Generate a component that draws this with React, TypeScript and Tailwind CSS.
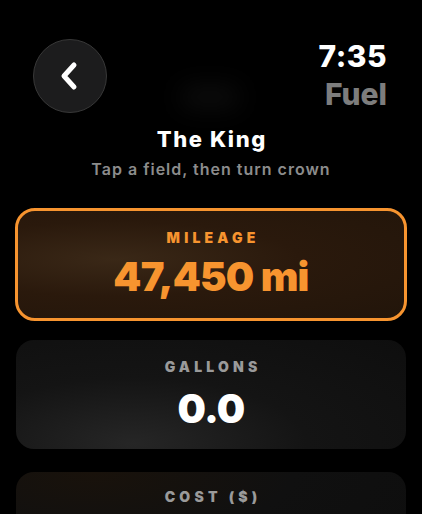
import { useState } from "react";

type Field = { key: string; label: string; value: string };

const fields: Field[] = [
  { key: "mileage", label: "MILEAGE", value: "47,450 mi" },
  { key: "gallons", label: "GALLONS", value: "0.0" },
  { key: "cost", label: "COST ($)", value: "" },
];

function BackButton() {
  return (
    <button className="w-[74px] h-[74px] rounded-full bg-[#1c1c1d] border-[1.5px] border-[#383838] flex items-center justify-center">
      <svg width="22" height="32" viewBox="0 0 22 32" fill="none">
        <path
          d="M15 5 L5 16 L15 27"
          stroke="white"
          strokeWidth="5"
          strokeLinecap="round"
          strokeLinejoin="round"
        />
      </svg>
    </button>
  );
}

export default function App() {
  const [active, setActive] = useState("mileage");

  return (
    <div
      className="relative w-[422px] h-[514px] overflow-hidden bg-black text-white"
      style={{ fontFamily: "Inter, 'Noto Sans', sans-serif" }}
    >
      {/* faint glow behind header */}
      <div className="absolute left-[180px] top-[86px] w-[60px] h-[22px] rounded-full bg-[#0d0d0d] blur-md" />

      <div className="relative flex justify-between pl-[33px] pr-[35px] pt-[39px]">
        <BackButton />
        <div className="flex flex-col items-end pt-[2px]">
          <div className="text-[30px] leading-none font-extrabold tracking-[0.5px]">7:35</div>
          <div className="mt-[8px] text-[30px] leading-none font-extrabold text-[#7d7d7d]">Fuel</div>
        </div>
      </div>

      <div className="relative flex flex-col items-center mt-[15px]">
        <div className="text-[22px] leading-none font-extrabold tracking-[1.6px] pl-[1.6px]">The King</div>
        <div className="mt-[11px] text-[16px] leading-none font-semibold text-[#8c8c8c] tracking-[1px]">
          Tap a field, then turn crown
        </div>
      </div>

      <div className="relative mt-[31px] flex flex-col">
        {fields.map((f) => {
          const on = active === f.key;
          return (
            <div
              key={f.key}
              onClick={() => setActive(f.key)}
              className={
                on
                  ? "mx-[15px] h-[113px] rounded-[20px] border-[3px] border-[#f7942f] bg-[radial-gradient(ellipse_at_25%_45%,#3a2817_0%,#2a190c_45%,#22150a_100%)] flex flex-col items-center pt-[19.5px] cursor-pointer"
                  : f.key === "gallons"
                  ? "mx-[16px] mt-[19px] h-[109px] rounded-[18px] bg-[radial-gradient(ellipse_at_30%_95%,#262626_0%,#141414_45%,#0e0e0e_100%)] flex flex-col items-center pt-[20px] cursor-pointer"
                  : "mx-[16px] mt-[23px] h-[109px] rounded-[18px] bg-[radial-gradient(ellipse_at_20%_0%,#19120b_0%,#101010_45%,#0d0d0d_100%)] flex flex-col items-center pt-[18px] cursor-pointer"
              }
            >
              <div
                className={
                  "text-[14px] leading-none font-black tracking-[4.2px] pl-[4.2px] " +
                  (on ? "text-[#f7942f]" : "text-[#9a9a9a]")
                }
              >
                {f.label}
              </div>
              {f.value && (
                <div
                  className={
                    "text-[40px] leading-none font-black tracking-[-0.8px] " +
                    (on ? "mt-[12px] text-[#f7942f]" : "mt-[15px] text-white")
                  }
                >
                  {f.value}
                </div>
              )}
            </div>
          );
        })}
      </div>
    </div>
  );
}
